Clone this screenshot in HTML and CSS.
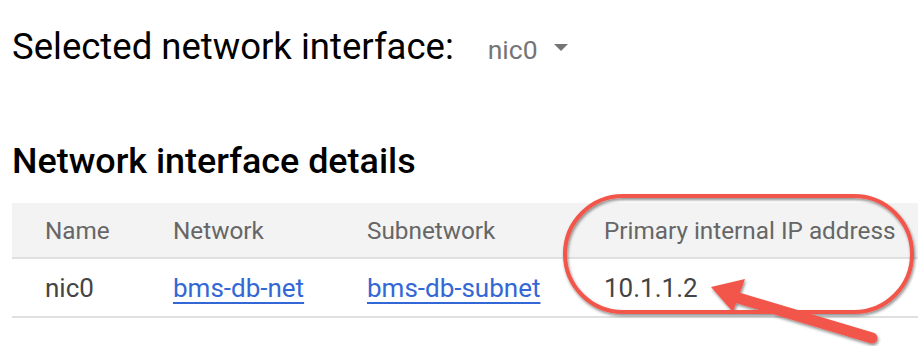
FILE: index.html
```html
<!DOCTYPE html>
<html lang="en">
<head>
    <meta charset="UTF-8">
    <title>Network interface details</title>
    <link rel="stylesheet" href="styles.css">
</head>
<body>
    <div class="page">
        <div class="selector">
            <h2>Selected network interface:</h2>
            <div class="dropdown">
                <span>nic0</span>
                <span class="caret"></span>
            </div>
        </div>

        <h2 class="section-title">Network interface details</h2>
        <table class="details">
            <thead>
                <tr>
                    <th class="col-name">Name</th>
                    <th class="col-net">Network</th>
                    <th class="col-subnet">Subnetwork</th>
                    <th>Primary internal IP address</th>
                </tr>
            </thead>
            <tbody>
                <tr>
                    <td>nic0</td>
                    <td><a href="#">bms-db-net</a></td>
                    <td><a href="#">bms-db-subnet</a></td>
                    <td>10.1.1.2</td>
                </tr>
            </tbody>
        </table>

        <!-- callout drawn over the table -->
        <svg class="callout" width="918" height="346" viewBox="0 0 918 346">
            <defs>
                <filter id="shadow" x="-10%" y="-10%" width="120%" height="130%">
                    <feDropShadow dx="1" dy="2" stdDeviation="1.5" flood-color="#000" flood-opacity="0.45"/>
                </filter>
            </defs>
            <g filter="url(#shadow)">
                <rect x="565" y="196" width="347" height="116" rx="58" ry="58" fill="none" stroke="#f2554a" stroke-width="4"/>
                <line x1="872" y1="338" x2="735" y2="297" stroke="#f2554a" stroke-width="11" stroke-linecap="round"/>
                <polygon points="711,287 745,279 733,312" fill="#f2554a"/>
            </g>
        </svg>
    </div>
</body>
</html>
```

FILE: styles.css
```css
* {
    margin: 0;
    padding: 0;
    box-sizing: border-box;
}
html, body {
    background: #fff;
    width: 918px;
    height: 346px;
    overflow: hidden;
    font-family: Roboto, "Liberation Sans", sans-serif;
}

.page {
    position: relative;
    padding: 22px 0 0 12px;
}

h2 {
    font-size: 36.5px;
    font-weight: 400;
    color: #000;
    line-height: 50px;
}

.selector {
    display: flex;
    align-items: center;
    gap: 34px;
}
.dropdown {
    display: flex;
    align-items: center;
    gap: 16px;
    font-size: 26.5px;
    color: #757575;
    padding-top: 4px;
}
.caret {
    width: 0;
    height: 0;
    border-left: 7px solid transparent;
    border-right: 7px solid transparent;
    border-top: 7px solid #757575;
    margin-top: -3px;
}

.section-title {
    font-size: 35.9px;
    font-weight: 500;
    margin-top: 64px;
}

.details {
    width: 906px;
    margin-top: 17px;
    border-collapse: collapse;
    font-size: 24.3px;
    text-align: left;
}
.details th {
    background: #f3f3f3;
    color: #666;
    font-weight: 400;
    height: 55px;
    border-bottom: 2px solid #e0e0e0;
    padding: 0;
}
.details td {
    color: #444;
    font-size: 26px;
    height: 59px;
    border-bottom: 2px solid #e0e0e0;
    padding: 0;
}
.details th:first-child,
.details td:first-child {
    padding-left: 33px;
}
.col-name { width: 161px; }
.col-net { width: 194px; }
.col-subnet { width: 237px; }

.details a {
    color: #3367d6;
    text-decoration: underline;
    text-underline-offset: 5px;
    text-decoration-thickness: 2px;
}

.callout {
    position: absolute;
    top: 0;
    left: 0;
    pointer-events: none;
}
```
